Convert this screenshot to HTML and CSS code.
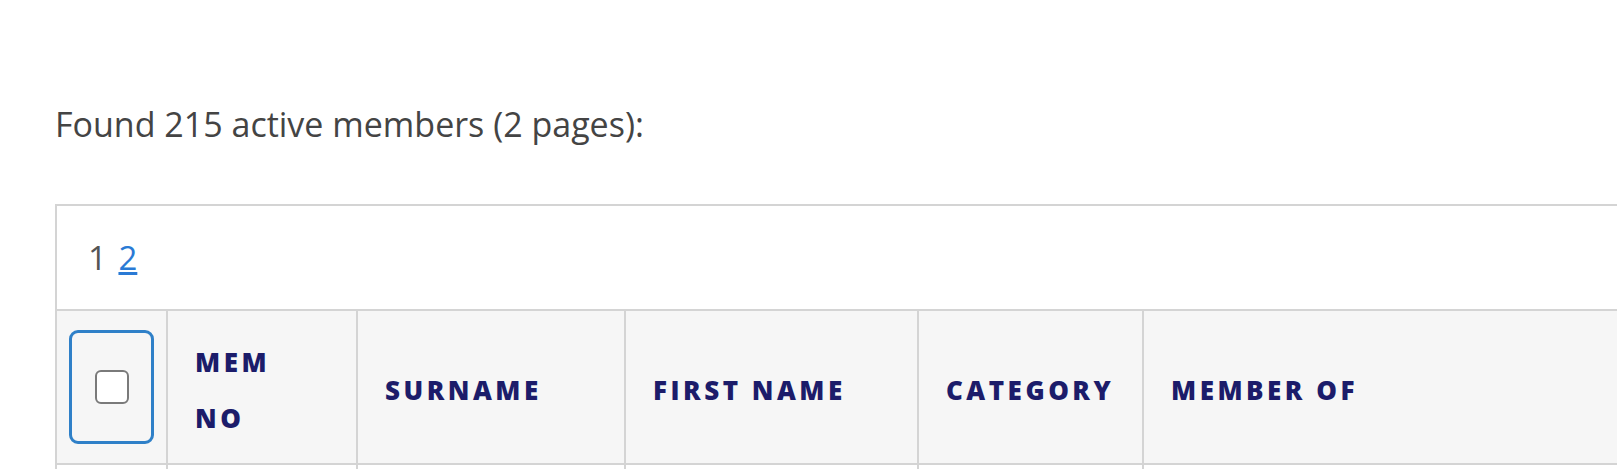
FILE: index.html
```html
<!DOCTYPE html>
<html lang="en">
<head>
<meta charset="utf-8">
<title>Members</title>
<link rel="stylesheet" href="styles.css">
</head>
<body>
<main class="page">
  <p class="summary">Found 215 active members (2 pages):</p>
  <table class="members">
    <colgroup>
      <col class="c-check">
      <col class="c-no">
      <col class="c-surname">
      <col class="c-first">
      <col class="c-cat">
      <col class="c-memberof">
    </colgroup>
    <thead>
      <tr class="pager-row">
        <td colspan="6" class="pager"><span class="cur">1</span> <a href="#" class="pg">2</a></td>
      </tr>
      <tr class="head-row">
        <th class="check-cell"><span class="ring"><span class="box"></span></span></th>
        <th class="narrow">MEM NO</th>
        <th>SURNAME</th>
        <th>FIRST NAME</th>
        <th>CATEGORY</th>
        <th>MEMBER OF</th>
      </tr>
    </thead>
    <tbody>
      <tr class="body-row"><td></td><td></td><td></td><td></td><td></td><td></td></tr>
    </tbody>
  </table>
</main>
</body>
</html>
```
FILE: styles.css
```css
html, body {
  margin: 0;
  padding: 0;
  background: #ffffff;
  overflow: hidden;
}
.page {
  padding-left: 55px;
  font-family: "Open Sans", "Liberation Sans", sans-serif;
  color: #444444;
}
.summary {
  margin: 0;
  padding-top: 102px;
  font-size: 34px;
  line-height: 45px;
  height: 102px;
}
.members {
  width: 1700px;
  table-layout: fixed;
  border-collapse: separate;
  border-spacing: 0;
  border-top: 2px solid #d4d4d4;
  border-left: 2px solid #d4d4d4;
}
.c-check { width: 111px; }
.c-no { width: 190px; }
.c-surname { width: 268px; }
.c-first { width: 293px; }
.c-cat { width: 225px; }
.c-memberof { width: auto; }
.members td, .members th {
  border-right: 2px solid #d4d4d4;
  border-bottom: 2px solid #d4d4d4;
  padding: 0;
}
.pager {
  height: 103px;
  padding-left: 31px !important;
  font-size: 33px;
  color: #555555;
  vertical-align: middle;
  background: #ffffff;
  word-spacing: 3px;
}
.pager .pg {
  color: #2a7ad5;
  text-decoration: underline;
}
.pager-row td { border-right: none; }
.head-row th {
  background: #f6f6f6;
  height: 152px;
  padding: 23px 20px 17px 27px;
  text-align: left;
  vertical-align: middle;
  font-family: "Open Sans", "Liberation Sans", sans-serif;
  font-weight: 800;
  font-size: 26px;
  line-height: 56px;
  letter-spacing: 3.5px;
  color: #1c1c6a;
  box-sizing: border-box;
}
.head-row th.narrow {
  padding-right: 60px;
}
.head-row th.check-cell {
  padding: 0;
  text-align: center;
}
.ring {
  display: inline-flex;
  align-items: center;
  justify-content: center;
  width: 85px;
  height: 114px;
  box-sizing: border-box;
  border: 3px solid #2f80c8;
  border-radius: 9px;
  vertical-align: middle;
}
.box {
  display: block;
  width: 34px;
  height: 34px;
  box-sizing: border-box;
  border: 2px solid #7a7a7a;
  border-radius: 6px;
  background: #ffffff;
}
.body-row td {
  height: 60px;
  background: #ffffff;
}
```
